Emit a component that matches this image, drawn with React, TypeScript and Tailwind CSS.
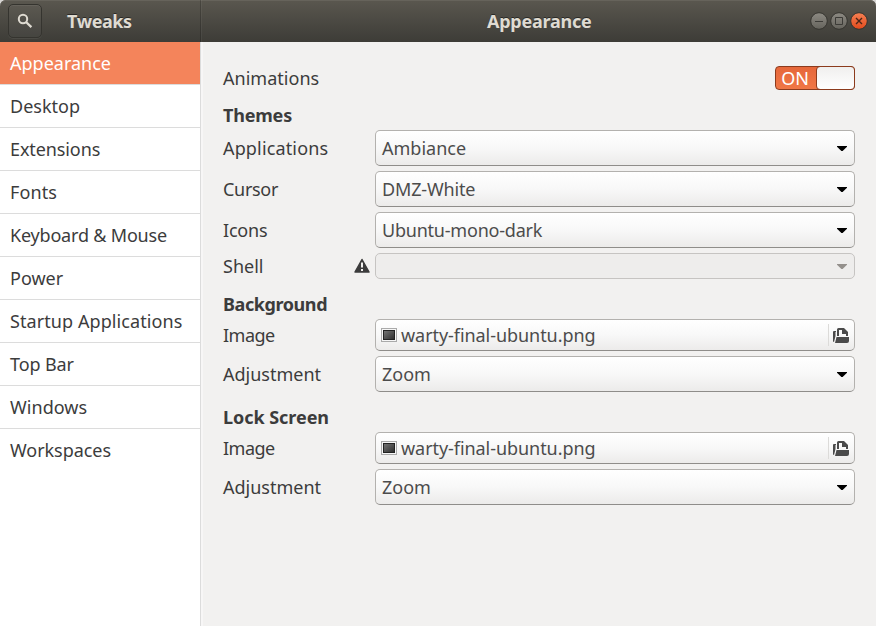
import type { ReactNode } from "react";

const pages: [string, string][] = [
  ["Appearance", "tracking-normal"],
  ["Desktop", "tracking-normal"],
  ["Extensions", "tracking-[-0.1px]"],
  ["Fonts", "tracking-[0.1px]"],
  ["Keyboard & Mouse", "tracking-[-0.19px]"],
  ["Power", "tracking-normal"],
  ["Startup Applications", "tracking-[0.08px]"],
  ["Top Bar", "tracking-[-0.1px]"],
  ["Windows", "tracking-[0.05px]"],
  ["Workspaces", "tracking-[-0.05px]"],
];

function Arrow({ color = "#000000" }: { color?: string }) {
  return (
    <svg width="10" height="6" viewBox="0 0 10 6" className="mr-[7px] mt-px shrink-0">
      <path d="M0 0h10v.8L5.6 5H4.4L0 .8z" fill={color} />
    </svg>
  );
}

function Combo({ value, track = "" }: { value: string; track?: string }) {
  return (
    <div className="flex h-9 w-[480px] items-center justify-between rounded-[5px] border border-[#b3b1ae] border-b-[#8f8d8a] bg-linear-to-b from-white via-[#f8f8f8] to-[#ecebea] pl-[6px]">
      <span className={"text-[#4c4c4c] " + track}>{value}</span>
      <Arrow />
    </div>
  );
}

function FileButton() {
  return (
    <div className="flex h-8 w-[480px] items-center rounded-[5px] border border-[#b3b1ae] border-b-[#8f8d8a] bg-linear-to-b from-white via-[#f8f8f8] to-[#ecebea] pl-[5px]">
      <svg width="16" height="14" viewBox="0 0 16 14" className="shrink-0">
        <defs>
          <linearGradient id="screen" x1="0" y1="0" x2="1" y2="1">
            <stop offset="0" stopColor="#777777" />
            <stop offset="1" stopColor="#2b2b2b" />
          </linearGradient>
        </defs>
        <rect x=".5" y=".5" width="15" height="13" fill="#f6f6f6" stroke="#aaaaaa" />
        <rect x="2.5" y="2.5" width="11" height="9" fill="url(#screen)" stroke="#222222" />
      </svg>
      <span className="ml-1 grow tracking-[-0.06px] text-[#4c4c4c]">warty-final-ubuntu.png</span>
      <span className="h-[22px] w-px bg-[#dcdbd9]" />
      <svg width="16" height="16" viewBox="0 0 16 16" className="ml-1 mr-[5px] shrink-0">
        <path d="M4 9V2.5Q4 1 5.5 1H11l4 4v4h-2V7H9V3H6v6z" fill="#4a4a4a" />
        <path d="M0 5q0-1 1-1h2v1H2.5v4L1 15q-1 0-1-1zM3.5 10H16v4q0 2-2 2H2z" fill="#4a4a4a" />
      </svg>
    </div>
  );
}

function Row({ label, h, track = "", children }: { label: string; h: string; track?: string; children: ReactNode }) {
  return (
    <div className={"flex items-center justify-between " + h}>
      <span className={track}>{label}</span>
      {children}
    </div>
  );
}

function Heading({ children, track = "" }: { children: ReactNode; track?: string }) {
  return (
    <h2 className={"flex h-10 items-center pt-[9px] font-bold text-[#3c3c3c] " + track}>{children}</h2>
  );
}

export default function App() {
  return (
    <div className="flex h-[626px] w-[876px] flex-col overflow-hidden bg-[#f2f1f0] font-['Noto_Sans',sans-serif] text-[18px] leading-6 whitespace-nowrap text-[#3c3c3c]">
      <div className="bg-[#d8d6d4]">
        <header className="flex h-[42px] rounded-t-[6px] bg-linear-to-b from-[#5a574f] to-[#3d3c37] font-bold text-[#dfdbd2] shadow-[inset_0_1px_0_#66635b] [text-shadow:0_-1px_0_#2b2a27]">
          <div className="flex w-[202px] items-center border-r border-[#ffffff0c] pl-2 shadow-[inset_-1px_0_0_#00000030]">
            <button className="flex size-[34px] items-center justify-center rounded-[5px] border border-[#35342f] bg-[#ffffff08] shadow-[inset_0_1px_0_#ffffff10,0_1px_0_#ffffff10]">
              <svg width="16" height="16" viewBox="0 0 16 16" fill="none" stroke="#dfdbd2">
                <circle cx="6" cy="6" r="4.2" strokeWidth="2" />
                <path d="M9 9L14.4 14.2" strokeWidth="2.3" />
              </svg>
            </button>
            <h1 className="-mt-px ml-[25px] tracking-[-0.4px]">Tweaks</h1>
          </div>
          <div className="flex grow items-center">
            <h1 className="-mt-px ml-[285px] grow tracking-[-0.25px]">Appearance</h1>
            <svg width="60" height="20" viewBox="0 0 60 20" className="mr-[7px]">
              <defs>
                <linearGradient id="gray" x1="0" y1="0" x2="0" y2="1">
                  <stop offset="0" stopColor="#8d8a83" />
                  <stop offset="1" stopColor="#65635c" />
                </linearGradient>
                <linearGradient id="orange" x1="0" y1="0" x2="0" y2="1">
                  <stop offset="0" stopColor="#f68154" />
                  <stop offset="1" stopColor="#e2491b" />
                </linearGradient>
              </defs>
              <g stroke="#35342f">
                <circle cx="10" cy="10" r="8.3" fill="url(#gray)" />
                <circle cx="30" cy="10" r="8.3" fill="url(#gray)" />
                <circle cx="50" cy="10" r="8.3" fill="url(#orange)" />
                <path d="M6 10.5h8M26.5 6.5h7v7h-7z" fill="none" stroke="#3c3b37" />
                <path d="M47 7l6 6M53 7l-6 6" stroke="#4a2517" strokeWidth="1.4" />
              </g>
            </svg>
          </div>
        </header>
      </div>
      <div className="flex grow">
        <nav className="w-[201px] shrink-0 border-r border-[#dcdcdc] bg-white">
          {pages.map(([name, track], i) => (
            <div
              key={name}
              className={
                "flex h-[43px] items-center border-b pl-[10px] " +
                (i === 0 ? "border-[#dcdcdc] bg-[#f4845b] bg-clip-padding text-white " : i === pages.length - 1 ? "border-transparent " : "border-[#dcdcdc] ") +
                track
              }
            >
              {name}
            </div>
          ))}
        </nav>
        <main className="grow border-l-2 border-[#f7f6f6] pt-6 pr-[21px] pl-5">
          <Row label="Animations" h="h-6" track="tracking-[0.02px]">
            <div className="flex h-6 w-20 rounded-[4px] border border-[#8c3b1d] bg-linear-to-b from-[#e6673a] to-[#f07746] text-white">
              <span className="flex w-10 items-center justify-center pr-1">
                <span className="-mr-0.5 tracking-normal">ON</span>
              </span>
              <span className="-my-px -mr-px grow rounded-[4px] border border-[#8c3b1d] bg-linear-to-b from-[#f0efee] to-white" />
            </div>
          </Row>
          <Heading track="tracking-[-0.2px]">Themes</Heading>
          <div className="flex flex-col gap-[5px]">
            <Row label="Applications" h="h-9" track="tracking-[0.15px]"><Combo value="Ambiance" /></Row>
            <Row label="Cursor" h="h-9" track="tracking-[-0.3px]"><Combo value="DMZ-White" track="tracking-[-0.15px]" /></Row>
            <Row label="Icons" h="h-9" track="tracking-[-0.2px]"><Combo value="Ubuntu-mono-dark" track="tracking-[-0.22px]" /></Row>
            <Row label="Shell" h="h-[26px]">
              <div className="flex items-center">
                <svg width="16" height="16" viewBox="0 0 16 16" className="mr-[5px]">
                  <path d="M8 1.5L15 14H1z" fill="#3c3c3c" stroke="#3c3c3c" strokeWidth="1.5" strokeLinejoin="round" />
                  <path d="M7 4.5h2v5H7zM7 11h2v2H7z" fill="#f2f1f0" />
                </svg>
                <div className="flex h-[26px] w-[480px] items-center justify-end rounded-[5px] border border-[#c6c4c2] bg-[#eeedec]">
                  <Arrow color="#94908c" />
                </div>
              </div>
            </Row>
          </div>
          <Heading track="tracking-[-0.42px]">Background</Heading>
          <div className="flex flex-col gap-[5px]">
            <Row label="Image" h="h-8" track="tracking-[-0.5px]"><FileButton /></Row>
            <Row label="Adjustment" h="h-9"><Combo value="Zoom" /></Row>
          </div>
          <Heading track="tracking-[-0.05px]">Lock Screen</Heading>
          <div className="flex flex-col gap-[5px]">
            <Row label="Image" h="h-8" track="tracking-[-0.5px]"><FileButton /></Row>
            <Row label="Adjustment" h="h-9"><Combo value="Zoom" /></Row>
          </div>
        </main>
      </div>
    </div>
  );
}
